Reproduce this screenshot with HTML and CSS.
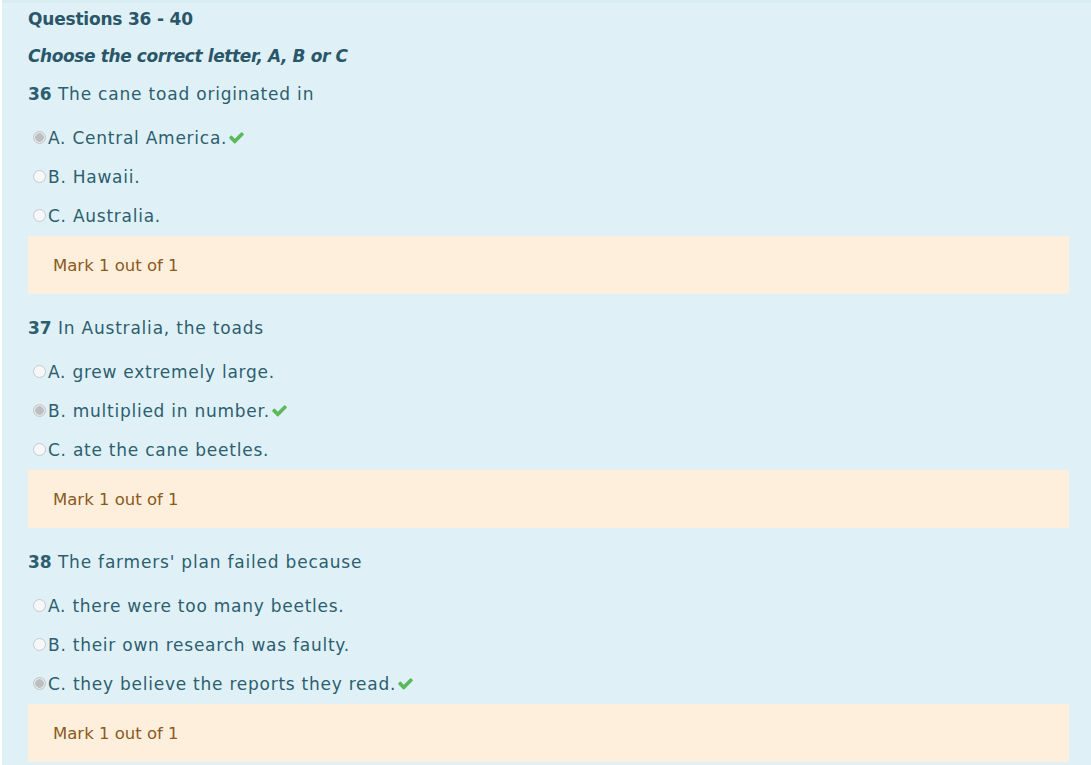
FILE: index.html
```html
<!DOCTYPE html>
<html lang="en">
<head>
<meta charset="utf-8">
<title>Questions 36 - 40</title>
<link rel="stylesheet" href="styles.css">
</head>
<body>
<main class="page">
  <h2 class="title">Questions 36 - 40</h2>
  <p class="instruction">Choose the correct letter, A, B or C</p>

  <section class="question">
    <p class="prompt"><b>36</b> The cane toad originated in</p>
    <ul class="options">
      <li class="option"><span class="radio checked"></span>A. Central America.<svg class="tick" viewBox="0 0 1792 1792"><path d="M1671 566q0 40-28 68l-724 724-136 136q-28 28-68 28t-68-28l-136-136-362-362q-28-28-28-68t28-68l136-136q28-28 68-28t68 28l294 295 656-657q28-28 68-28t68 28l136 136q28 28 28 68z"/></svg></li>
      <li class="option"><span class="radio"></span>B. Hawaii.</li>
      <li class="option"><span class="radio"></span>C. Australia.</li>
    </ul>
    <div class="mark">Mark 1 out of 1</div>
  </section>

  <section class="question">
    <p class="prompt"><b>37</b> In Australia, the toads</p>
    <ul class="options">
      <li class="option"><span class="radio"></span>A. grew extremely large.</li>
      <li class="option"><span class="radio checked"></span>B. multiplied in number.<svg class="tick" viewBox="0 0 1792 1792"><path d="M1671 566q0 40-28 68l-724 724-136 136q-28 28-68 28t-68-28l-136-136-362-362q-28-28-28-68t28-68l136-136q28-28 68-28t68 28l294 295 656-657q28-28 68-28t68 28l136 136q28 28 28 68z"/></svg></li>
      <li class="option"><span class="radio"></span>C. ate the cane beetles.</li>
    </ul>
    <div class="mark">Mark 1 out of 1</div>
  </section>

  <section class="question">
    <p class="prompt"><b>38</b> The farmers' plan failed because</p>
    <ul class="options">
      <li class="option"><span class="radio"></span>A. there were too many beetles.</li>
      <li class="option"><span class="radio"></span>B. their own research was faulty.</li>
      <li class="option"><span class="radio checked"></span>C. they believe the reports they read.<svg class="tick" viewBox="0 0 1792 1792"><path d="M1671 566q0 40-28 68l-724 724-136 136q-28 28-68 28t-68-28l-136-136-362-362q-28-28-28-68t28-68l136-136q28-28 68-28t68 28l294 295 656-657q28-28 68-28t68 28l136 136q28 28 28 68z"/></svg></li>
    </ul>
    <div class="mark">Mark 1 out of 1</div>
  </section>
</main>
</body>
</html>
```

FILE: styles.css
```css
html, body {
  margin: 0;
  padding: 0;
  background: #ffffff;
}

body {
  font-family: "DejaVu Sans", "Open Sans", sans-serif;
  color: #2d5e6f;
}

.page {
  margin-left: 2px;
  min-height: 765px;
  box-sizing: border-box;
  background: #dff1f7;
  border-top: 3px solid #d7ecf3;
  padding: 3px 22px 0 26px;
}

.title {
  margin: 0;
  font-size: 17px;
  font-weight: 700;
  line-height: 26px;
  letter-spacing: -0.2px;
  color: #2a5669;
}

.instruction {
  margin: 11px 0 0;
  font-size: 17px;
  font-style: italic;
  font-weight: 700;
  line-height: 26px;
  letter-spacing: -0.4px;
  color: #2a5669;
}

.question {
  margin-top: 12px;
}

.question + .question {
  margin-top: 21px;
}

.prompt {
  margin: 0;
  font-size: 17px;
  line-height: 26px;
  letter-spacing: 0.8px;
}

.prompt b {
  font-weight: 700;
  letter-spacing: 0;
}

.options {
  list-style: none;
  margin: 11px 0 0;
  padding: 0;
}

.option {
  display: flex;
  align-items: center;
  height: 39px;
  font-size: 17px;
  letter-spacing: 0.75px;
}

.radio {
  width: 13px;
  height: 13px;
  box-sizing: border-box;
  margin: 0 2px 0 5px;
  border: 1px solid #c6cacd;
  border-radius: 50%;
  background: #f5f7f8;
  flex: none;
}

.radio.checked {
  border: 1px solid #c2c5c8;
  background: radial-gradient(circle, #bcbfc2 0 4px, #e4e6e8 4.5px);
}

.tick {
  width: 17px;
  height: 17px;
  margin-left: 1px;
  fill: #5cb85c;
}

.mark {
  margin-top: 1px;
  height: 58px;
  display: flex;
  align-items: center;
  padding-left: 25px;
  background: #fdefdc;
  color: #8a5a1e;
  font-size: 16.5px;
}
```
